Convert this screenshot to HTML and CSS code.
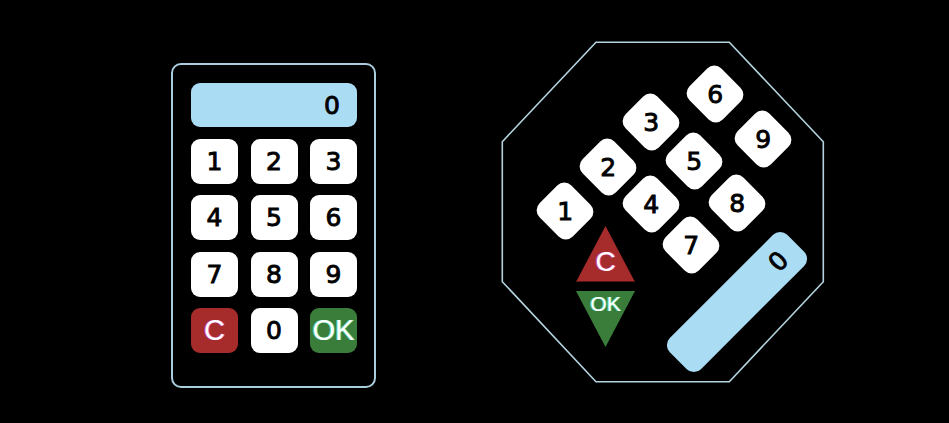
FILE: index.html
```html
<!DOCTYPE html>
<html lang="en">
<head>
  <meta charset="UTF-8">
  <meta name="viewport" content="width=device-width, initial-scale=1.0">
  <title>Keypad Layouts</title>
  <link rel="stylesheet" href="styles.css">
</head>
<body>
  <div class="stage">
    <!-- classic keypad -->
    <div class="keypad">
      <div class="display"><span class="display-value">0</span></div>
      <div class="keys">
        <button class="key">1</button>
        <button class="key">2</button>
        <button class="key">3</button>
        <button class="key">4</button>
        <button class="key">5</button>
        <button class="key">6</button>
        <button class="key">7</button>
        <button class="key">8</button>
        <button class="key">9</button>
        <button class="key key-clear">C</button>
        <button class="key">0</button>
        <button class="key key-ok">OK</button>
      </div>
    </div>

    <!-- scrambled octagon keypad -->
    <div class="octo">
      <svg class="octo-frame" width="324" height="342" viewBox="0 0 324 342">
        <polygon points="95,1.3 228.3,1.3 322.3,100.7 322.3,240.7 228.3,340.7 95,340.7 1.3,240.7 1.3,100.7" />
      </svg>
      <button class="key tilt k1"><span>1</span></button>
      <button class="key tilt k2"><span>2</span></button>
      <button class="key tilt k3"><span>3</span></button>
      <button class="key tilt k4"><span>4</span></button>
      <button class="key tilt k5"><span>5</span></button>
      <button class="key tilt k6"><span>6</span></button>
      <button class="key tilt k7"><span>7</span></button>
      <button class="key tilt k8"><span>8</span></button>
      <button class="key tilt k9"><span>9</span></button>
      <button class="tri tri-clear">C</button>
      <button class="tri tri-ok">OK</button>
      <div class="display tilt-display"><span class="display-value">0</span></div>
    </div>
  </div>
</body>
</html>
```

FILE: styles.css
```css
* {
  margin: 0;
  padding: 0;
  box-sizing: border-box;
}

body {
  background-color: #000;
  color: #000;
  font-family: 'DejaVu Sans', sans-serif;
  height: 100vh;
  overflow: hidden;
}

.stage {
  display: flex;
  align-items: flex-start;
  padding-left: 171px;
}

button {
  border: none;
  font-family: inherit;
  cursor: pointer;
}

/* ---------- classic keypad ---------- */

.keypad {
  width: 205px;
  height: 325px;
  margin-top: 63px;
  border: 2px solid #a9cddc;
  border-radius: 10px;
  padding: 18px 17px 0 18px;
  display: flex;
  flex-direction: column;
  gap: 12px;
}

.display {
  width: 166px;
  height: 44px;
  background-color: #aadcf4;
  border-radius: 9px;
  display: flex;
  align-items: center;
  justify-content: flex-end;
  padding-right: 17px;
}

.display-value {
  font-size: 25px;
  line-height: 1;
  -webkit-text-stroke: 0.9px #000;
}

.keys {
  display: grid;
  grid-template-columns: repeat(3, 47px);
  grid-auto-rows: 45px;
  justify-content: space-between;
  row-gap: 11.3px;
}

.key {
  width: 47px;
  height: 45px;
  background-color: #fff;
  border-radius: 9px;
  font-size: 25px;
  color: #000;
  display: flex;
  align-items: center;
  justify-content: center;
  line-height: 1;
  -webkit-text-stroke: 0.9px #000;
}

.key-clear,
.key-ok {
  font-family: 'Liberation Sans', Arial, sans-serif;
  font-size: 29px;
  color: #fff;
  -webkit-text-stroke: 0;
}

.key-clear {
  background-color: #a52c2a;
  text-shadow: 1px 0 rgba(230, 90, 230, 0.7), -1px 0 rgba(230, 90, 230, 0.7);
}

.key-ok {
  background-color: #3a7d3a;
  text-shadow: 1px 0 rgba(110, 255, 220, 0.6), -1px 0 rgba(110, 255, 220, 0.6);
}

/* ---------- octagon keypad ---------- */

.octo {
  position: relative;
  width: 324px;
  height: 342px;
  margin-top: 41px;
  margin-left: 125px;
}

.octo-frame {
  position: absolute;
  left: 0;
  top: 0;
}

.octo-frame polygon {
  fill: none;
  stroke: #b4d3df;
  stroke-width: 1.6;
}

.tilt {
  position: absolute;
  border-radius: 10px;
  transform: translate(-50%, -50%) rotate(45deg);
}

/* digits stay upright inside the tilted keys */
.tilt span {
  display: block;
  transform: rotate(-45deg);
}

.k1 { left: 64px;    top: 170px; }
.k2 { left: 106.5px; top: 125.7px; }
.k3 { left: 150.3px; top: 80.7px; }
.k4 { left: 150.3px; top: 163.3px; }
.k5 { left: 193.3px; top: 119.8px; }
.k6 { left: 213.5px; top: 52.5px; }
.k7 { left: 190px;   top: 204px; }
.k8 { left: 236.3px; top: 162.3px; }
.k9 { left: 261.5px; top: 98.3px; }

.tri {
  position: absolute;
  left: 75px;
  width: 59px;
  height: 56px;
  font-family: 'Liberation Sans', Arial, sans-serif;
  color: #fff;
  line-height: 1;
  display: flex;
  align-items: flex-start;
  justify-content: center;
}

.tri-clear {
  top: 185px;
  background-color: #a52c2a;
  clip-path: polygon(50% 0, 100% 100%, 0 100%);
  font-size: 28px;
  padding-top: 22px;
  border-bottom: 1px solid #5a1414;
  text-shadow: 1px 0 rgba(230, 90, 230, 0.7), -1px 0 rgba(230, 90, 230, 0.7);
}

.tri-ok {
  top: 250px;
  background-color: #3a7d3a;
  clip-path: polygon(0 0, 100% 0, 50% 100%);
  font-size: 21px;
  padding-top: 2px;
  text-shadow: 1px 0 rgba(110, 255, 220, 0.6), -1px 0 rgba(110, 255, 220, 0.6);
}

.tilt-display {
  position: absolute;
  left: 236px;
  top: 261px;
  border-radius: 10px;
  transform: translate(-50%, -50%) rotate(-45deg);
}
```
